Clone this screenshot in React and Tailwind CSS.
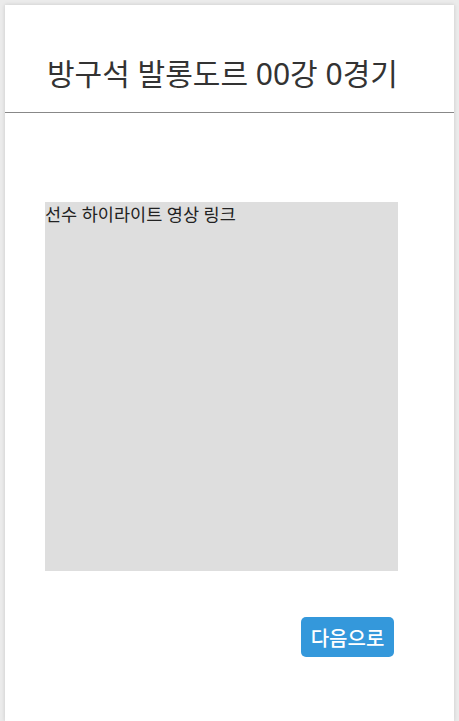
export default function App() {
  return (
    <div className="min-h-screen bg-[#ebebeb] pt-[5px] px-[5px]" style={{ fontFamily: '"Noto Sans", "Noto Sans CJK KR", sans-serif' }}>
      <div className="bg-white min-h-[716px] shadow-[0_0_4px_rgba(0,0,0,0.15)]">
        {/* Header */}
        <div className="h-[108px] pl-[42px] pt-[49px] border-b border-[#888]">
          <h1 className="text-[30px] leading-[40px] text-[#333] font-normal">방구석 발롱도르 00강 0경기</h1>
        </div>

        {/* Video box */}
        <div className="pt-[89px] pl-[40px]">
          <div className="w-[353px] h-[369px] bg-[#dedede] text-[17.5px] text-[#222] leading-[24px]">
            선수 하이라이트 영상 링크
          </div>
        </div>

        {/* Next */}
        <div className="flex justify-end pr-[60px] pt-[46px]">
          <button className="w-[93px] h-[40px] bg-[#3498db] rounded-[5px] text-white text-[20px] font-medium pt-[3px]">
            다음으로
          </button>
        </div>
      </div>
    </div>
  )
}
